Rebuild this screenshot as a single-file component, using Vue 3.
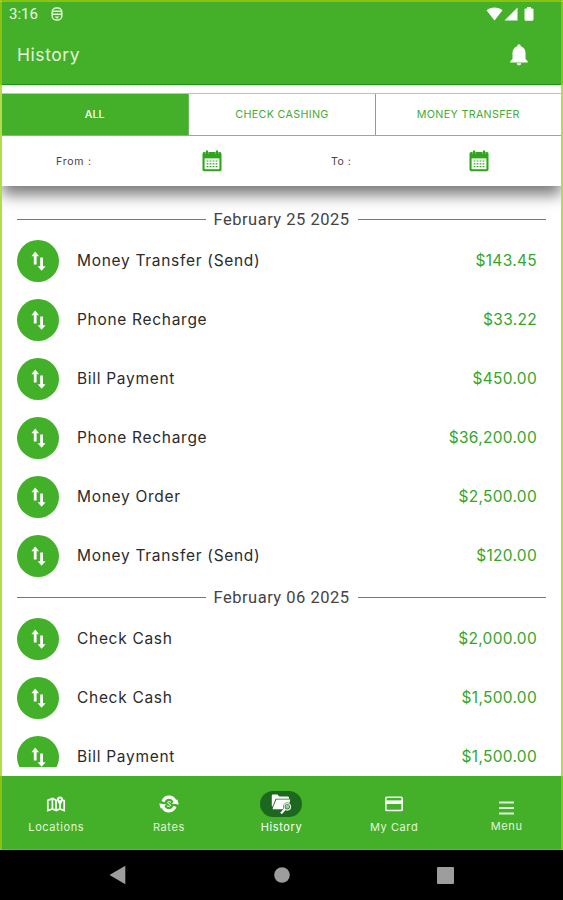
<script setup>
import { ref } from "vue";

const tabs = ["ALL", "CHECK CASHING", "MONEY TRANSFER"];
const activeTab = ref("ALL");
const activeNav = ref("History");

const groups = [
  {
    date: "February 25 2025",
    items: [
      { id: 1, name: "Money Transfer (Send)", amount: "$143.45" },
      { id: 2, name: "Phone Recharge", amount: "$33.22" },
      { id: 3, name: "Bill Payment", amount: "$450.00" },
      { id: 4, name: "Phone Recharge", amount: "$36,200.00" },
      { id: 5, name: "Money Order", amount: "$2,500.00" },
      { id: 6, name: "Money Transfer (Send)", amount: "$120.00" },
    ],
  },
  {
    date: "February 06 2025",
    items: [
      { id: 7, name: "Check Cash", amount: "$2,000.00" },
      { id: 8, name: "Check Cash", amount: "$1,500.00" },
      { id: 9, name: "Bill Payment", amount: "$1,500.00" },
    ],
  },
];

const navItems = ["Locations", "Rates", "History", "My Card", "Menu"];
</script>

<template>
  <div class="phone">
    <div class="app">
      <header class="header">
        <div class="status">
          <span class="time">3:16</span>
          <svg class="status-app" width="12" height="14" viewBox="0 0 12 14">
            <rect x="1.2" y="1" width="9.6" height="12" rx="4" fill="none" stroke="#e2f5d8" stroke-width="1.5" />
            <path d="M2 4.2H10M2 7.3H10" stroke="#e2f5d8" stroke-width="1.6" />
            <path d="M3.5 9.5H8.5L6 11.8Z" fill="#e2f5d8" />
          </svg>
          <div class="status-right">
            <svg width="17" height="14" viewBox="0 0 17 14">
              <path d="M0.5 3.2C5-0.4 12-0.4 16.5 3.2L8.5 13.4Z" fill="#fff" />
            </svg>
            <svg width="14" height="14" viewBox="0 0 14 14">
              <path d="M13.5 0.5V13.5H0.5Z" fill="#fff" />
            </svg>
            <svg class="battery" width="10" height="14" viewBox="0 0 10 14">
              <path d="M3 0H7V1.4H8.4Q9.5 1.4 9.5 2.5V12.6Q9.5 13.7 8.4 13.7H1.6Q.5 13.7 .5 12.6V2.5Q.5 1.4 1.6 1.4H3Z" fill="#fff" />
            </svg>
          </div>
        </div>
        <div class="title-bar">
          <h1>History</h1>
          <svg width="18" height="22" viewBox="0 0 18 22">
            <path d="M9 0.2C10.1 .2 10.7 1 10.7 2.2C13.8 3.1 15.5 5.8 15.5 9V15L17.7 17.2V18.6H.3V17.2L2.5 15V9C2.5 5.8 4.2 3.1 7.3 2.2C7.3 1 7.9 .2 9 .2Z" fill="#fff" />
            <path d="M6.8 19.2H11.2C11 20.6 10.2 21.2 9 21.2C7.8 21.2 7 20.6 6.8 19.2Z" fill="#fff" />
          </svg>
        </div>
      </header>

      <section class="panel">
        <div class="tabs">
          <button
            v-for="tab in tabs"
            :key="tab"
            class="tab"
            :class="{ active: activeTab === tab }"
            @click="activeTab = tab"
          >
            {{ tab }}
          </button>
        </div>
        <div class="filters">
          <div v-for="label in ['From :', 'To :']" :key="label" class="filter">
            <span>{{ label }}</span>
            <svg width="20" height="22" viewBox="0 0 20 22">
              <path d="M2.2 2H17.8Q19.5 2 19.5 3.8V19.4Q19.5 21.2 17.8 21.2H2.2Q.5 21.2 .5 19.4V3.8Q.5 2 2.2 2Z" fill="#2fa51c" />
              <path d="M5 0.4V4M15 0.4V4" stroke="#2fa51c" stroke-width="2.2" />
              <path d="M3.4 1.2V4M6.6 1.2V4M13.4 1.2V4M16.6 1.2V4" stroke="#fff" stroke-opacity=".6" stroke-width=".6" />
              <rect x="2.6" y="8.4" width="14.8" height="10.8" fill="#fff" />
              <path d="M4.6 11H15.4M4.6 13.8H15.4M4.6 16.6H15.4" stroke="#2fa51c" stroke-width="1.2" stroke-dasharray="1.8 1.2" />
            </svg>
          </div>
        </div>
      </section>

      <main class="list">
        <div v-for="group in groups" :key="group.date">
          <div class="date">
            <span class="line"></span>
            <span class="date-text">{{ group.date }}</span>
            <span class="line"></span>
          </div>
          <div v-for="item in group.items" :key="item.id" class="row">
            <div class="circle">
              <svg width="42" height="42" viewBox="0 0 42 42">
                <path d="M18.2 11.6L22 16.2H19.6V24.6H16.8V16.2H14.4Z" fill="#fff" />
                <path d="M24.6 30.8L20.6 26.2H23.2V17.4H26V26.2H28.6Z" fill="#fff" />
              </svg>
            </div>
            <span class="name">{{ item.name }}</span>
            <span class="amount">{{ item.amount }}</span>
          </div>
        </div>
      </main>

      <nav class="nav">
        <a
          v-for="item in navItems"
          :key="item"
          class="nav-item"
          :class="{ selected: activeNav === item, menu: item === 'Menu' }"
          @click="activeNav = item"
        >
          <span class="pill">
            <svg v-if="item === 'Locations'" width="20" height="16" viewBox="0 0 20 16">
              <path d="M1.8 4.4L6.4 2.6V13L1.8 14.6ZM6.4 2.6L10 4V14.4L6.4 13M10 14.4L14 13L18.2 14.6V4.6L16.8 4.2M14 13V8" fill="none" stroke="#fff" stroke-width="1.7" />
              <path d="M14 .4A3 3 0 0 1 17 3.4C17 5.6 14 9 14 9S11 5.6 11 3.4A3 3 0 0 1 14 .4Z" fill="#fff" />
              <circle cx="14" cy="3.4" r="1" fill="#42af29" />
            </svg>
            <svg v-else-if="item === 'Rates'" width="20" height="18" viewBox="0 0 20 18">
              <path d="M4 6.6C5.2 3.6 7.4 2.2 10 2.2C12.8 2.2 15 3.8 16 6.4M16 11.4C14.8 14.4 12.6 15.8 10 15.8C7.2 15.8 5 14.2 4 11.6" fill="none" stroke="#fff" stroke-width="3.2" />
              <path d="M12.6 8.6L19.8 9.4L18.2 4.2ZM7.4 9.4L.2 8.6L1.8 13.8Z" fill="#fff" />
              <path d="M11.9 7.2C10.5 6.3 8.6 6.5 8.7 7.8C8.9 9.1 11.5 8.9 11.5 10.2C11.5 11.5 9.4 11.7 8 10.8" fill="none" stroke="#fff" stroke-width="1" />
            </svg>
            <svg v-else-if="item === 'History'" width="21" height="20" viewBox="0 0 21 20">
              <path d="M.8 1.5Q.8.4 2 .4H6.3L8.3 2.4H16.5Q18 2.4 18 3.8V4.7H4.6L1.6 12.4L.8 12Z" fill="#fff" />
              <path d="M5.4 5.6H19.2L17.3 15.2H1.6L2 13.6Z" fill="#fff" />
              <circle cx="16.3" cy="12.8" r="3.2" fill="#9fc49f" stroke="#1d681f" stroke-width="2.4" />
              <circle cx="16.3" cy="12.8" r="3.2" fill="none" stroke="#e4f0e4" stroke-width="1.3" />
              <path d="M13.9 15.2L10 19.4" stroke="#fff" stroke-width="2.2" />
            </svg>
            <svg v-else-if="item === 'My Card'" width="18" height="16" viewBox="0 0 18 16">
              <rect x=".8" y="1.3" width="16.4" height="13.2" rx="1" fill="none" stroke="#fff" stroke-width="1.6" />
              <rect x="1" y="4.4" width="16" height="3.6" fill="#fff" />
            </svg>
            <svg v-else width="15" height="14" viewBox="0 0 15 14">
              <path d="M0 1.5H15M0 7H15M0 12.5H15" stroke="#e4f5dd" stroke-width="2" />
            </svg>
          </span>
          <span class="nav-label">{{ item }}</span>
        </a>
      </nav>
    </div>

    <footer class="system">
      <svg width="17" height="20" viewBox="0 0 17 20">
        <path d="M.5 10L16.3 .8V19.2Z" fill="#9d9d9d" />
      </svg>
      <svg width="16" height="16" viewBox="0 0 16 16">
        <circle cx="8" cy="8" r="7.8" fill="#9d9d9d" />
      </svg>
      <svg width="17" height="17" viewBox="0 0 17 17">
        <rect width="17" height="17" rx="1" fill="#9d9d9d" />
      </svg>
    </footer>
  </div>
</template>

<style>
body {
  margin: 0;
  background: #000;
}
</style>

<style scoped>
.phone {
  width: 563px;
  height: 900px;
  display: flex;
  flex-direction: column;
  overflow: hidden;
  background: #000;
  font-family: Inter, "Liberation Sans", sans-serif;
}
.app {
  box-sizing: border-box;
  height: 850px;
  display: flex;
  flex-direction: column;
  background: #fff;
  border: 2px solid #b2dc4a;
  border-top-color: #87c310;
  border-bottom: 1px solid #76b70f;
}
.header {
  box-sizing: border-box;
  height: 83px;
  background: #44b02a;
  border-bottom: 1px solid #159a10;
  box-shadow: -2px 0 #87c310, 2px 0 #87c310;
}
.status {
  height: 24px;
  display: flex;
  align-items: center;
  padding-left: 7px;
}
.time {
  width: 42px;
  font-family: Roboto, sans-serif;
  font-size: 15px;
  color: #e8f7e1;
}
.status-right {
  display: flex;
  margin-left: auto;
  margin-right: 27px;
  gap: 1px;
}
.battery {
  margin-left: 5px;
}
.title-bar {
  height: 58px;
  display: flex;
  align-items: center;
  justify-content: space-between;
  padding: 0 33px 0 15px;
}
h1 {
  margin: -1px 0 0;
  font-size: 17.5px;
  font-weight: 400;
  letter-spacing: 0.55px;
  color: #e3f5db;
}
.panel {
  position: relative;
  box-sizing: border-box;
  height: 101px;
  padding-top: 8px;
  background: #fff;
  box-shadow: 0 9px 14px rgba(0, 0, 0, 0.52);
  clip-path: inset(0 0 -40px 0);
}
.tabs {
  display: flex;
  box-sizing: border-box;
  height: 43px;
  border-top: 1px solid #a6d49b;
  border-bottom: 1px solid #7fbd74;
}
.tab {
  box-sizing: border-box;
  width: 33.333%;
  padding: 0;
  border: 0;
  border-left: 1px solid #6fb863;
  background: #fff;
  color: #45ab34;
  font-family: inherit;
  font-size: 10.75px;
  letter-spacing: 0.3px;
}
.tab.active {
  background: #44b02a;
  border-color: #44b02a;
  color: #fff;
  font-weight: 500;
  letter-spacing: 0;
  padding-right: 2px;
}
.filters {
  display: flex;
  height: 50px;
  padding-left: 54px;
}
.filter {
  display: flex;
  align-items: center;
  justify-content: space-between;
  width: 166px;
  font-size: 10.5px;
  letter-spacing: 0.8px;
  color: #444;
}
.filter + .filter {
  width: 158px;
  margin-left: 109px;
}
.filter + .filter span {
  letter-spacing: 0.5px;
}
.list {
  height: 560px;
  padding: 21px 15px 0;
  box-sizing: content-box;
  overflow: hidden;
}
.date {
  height: 24px;
  display: flex;
  align-items: center;
}
.line {
  flex: 1;
  height: 1px;
  background: #777;
}
.date-text {
  width: 152px;
  text-align: center;
  font-family: Roboto, sans-serif;
  font-size: 16.5px;
  letter-spacing: 0.5px;
  color: #444;
}
.row {
  height: 59px;
  display: flex;
  align-items: center;
  padding-right: 9px;
}
.circle {
  width: 42px;
  height: 42px;
  border-radius: 50%;
  background: #42b028;
}
.name {
  margin-left: 18px;
  line-height: 20px;
  font-size: 15.5px;
  letter-spacing: 0.7px;
  color: #2b2b2b;
}
.amount {
  margin-left: auto;
  line-height: 20px;
  font-size: 15.5px;
  letter-spacing: 0.3px;
  color: #35a52b;
}
.nav {
  height: 73px;
  flex: none;
  margin: auto -2px 0;
  display: flex;
  background: #44b02a;
  box-shadow: inset 2px 0 #87c310, inset -2px 0 #87c310;
}
.nav-item {
  flex: 1;
  display: flex;
  flex-direction: column;
  align-items: center;
  padding-top: 15px;
}
.pill {
  width: 42px;
  height: 26px;
  display: flex;
  align-items: center;
  justify-content: center;
  border-radius: 13px;
}
.selected .pill {
  background: #1d681f;
}
.nav-label {
  margin-top: 3px;
  font-size: 11px;
  line-height: 14px;
  letter-spacing: 0.6px;
  color: #e3f5db;
}
.selected .nav-label {
  color: #fff;
}
.menu .pill {
  height: 33px;
}
.menu .nav-label {
  margin-top: -5px;
}
.system {
  height: 50px;
  display: flex;
  align-items: center;
  justify-content: space-between;
  padding: 0 109px;
}
</style>
